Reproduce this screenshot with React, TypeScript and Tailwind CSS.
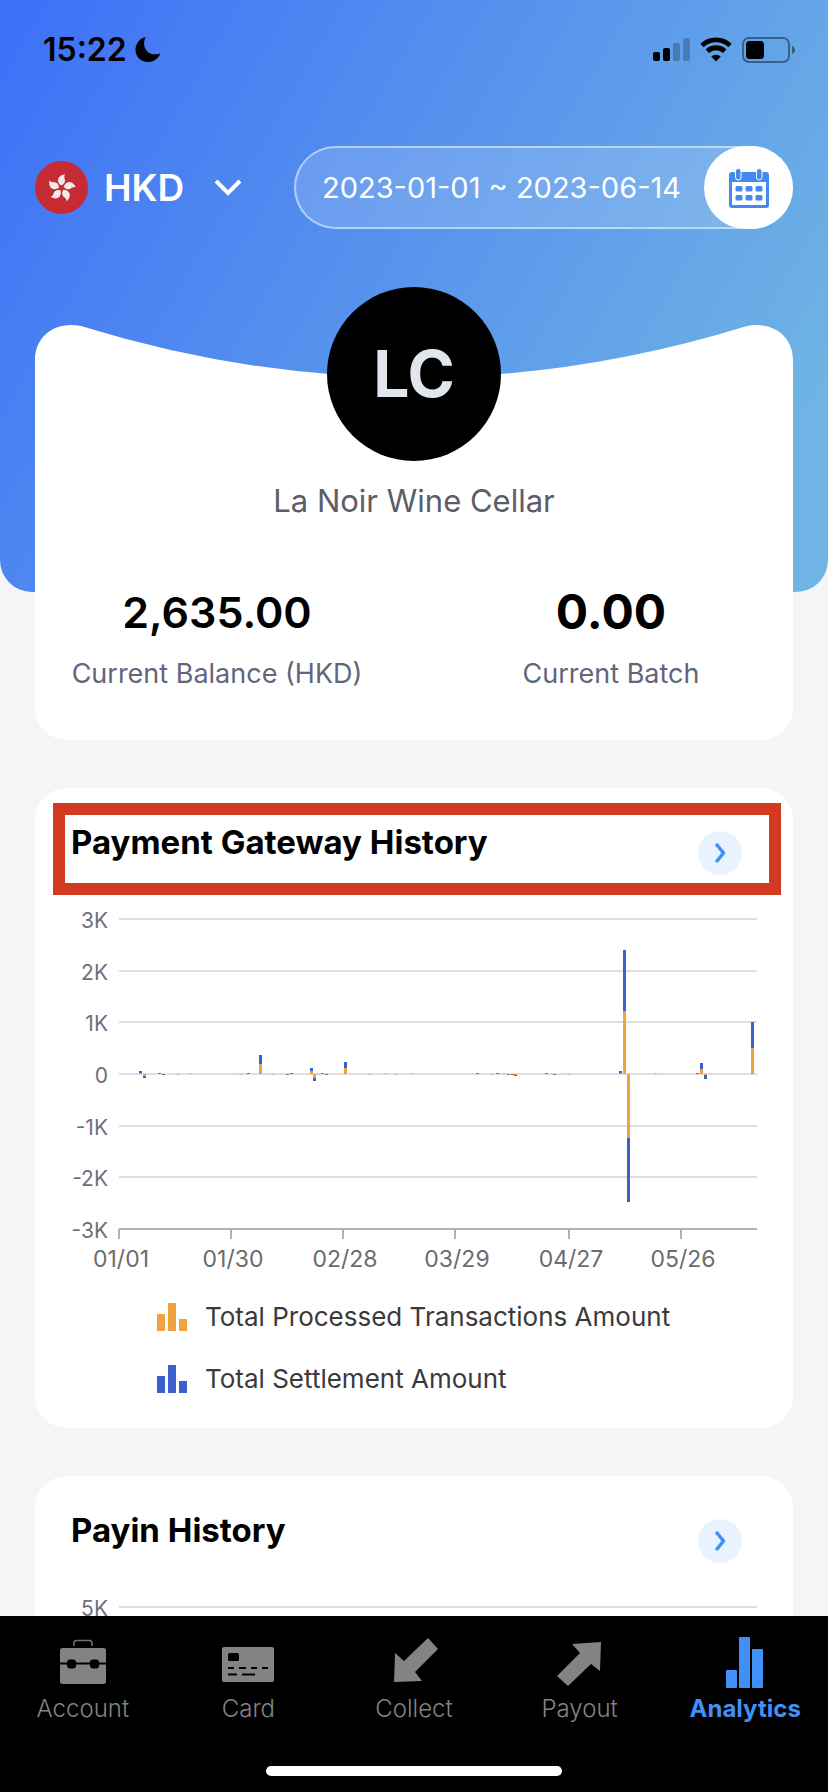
import React, { useState } from "react";

// stacked daily totals, in chart pixels above (+) or below (-) the zero line
const bars = [
  { x: 105, processed: 1, settled: 2 },
  { x: 109, processed: -2, settled: -2 },
  { x: 225, processed: 10, settled: 9 },
  { x: 276, processed: 3, settled: 3 },
  { x: 279, processed: -4, settled: -3 },
  { x: 310, processed: 6, settled: 6 },
  { x: 480, processed: -1, settled: -1 },
  { x: 585, processed: 1, settled: 2 },
  { x: 589, processed: 63, settled: 61 },
  { x: 593, processed: -64, settled: -64 },
  { x: 666, processed: 5, settled: 6 },
  { x: 670, processed: -1, settled: -4 },
  { x: 717, processed: 26, settled: 26 },
];

// days with almost no volume
const traces = [
  { x: 124, up: true, dark: true },
  { x: 128, up: false, dark: true },
  { x: 143, up: false, dark: false },
  { x: 155, up: true, dark: false },
  { x: 205, up: false, dark: false },
  { x: 213, up: true, dark: true },
  { x: 237, up: false, dark: false },
  { x: 252, up: false, dark: true },
  { x: 256, up: true, dark: true },
  { x: 283, up: false, dark: false },
  { x: 287, up: true, dark: true },
  { x: 291, up: false, dark: true },
  { x: 334, up: false, dark: false },
  { x: 350, up: true, dark: false },
  { x: 361, up: false, dark: false },
  { x: 376, up: true, dark: false },
  { x: 442, up: true, dark: true },
  { x: 456, up: false, dark: false },
  { x: 462, up: true, dark: true },
  { x: 469, up: true, dark: false },
  { x: 473, up: false, dark: true },
  { x: 477, up: false, dark: true },
  { x: 511, up: true, dark: true },
  { x: 519, up: false, dark: true },
  { x: 533, up: false, dark: false },
  { x: 620, up: true, dark: false },
  { x: 662, up: true, dark: true },
];

const xTicks = [
  { x: 84, label: "01/01" },
  { x: 196, label: "01/30" },
  { x: 308, label: "02/28" },
  { x: 420, label: "03/29" },
  { x: 534, label: "04/27" },
  { x: 646, label: "05/26" },
];

const ORANGE = "#f0a23c";
const BLUE = "#3b5fcb";

const StatusBar: React.FC = () => (
  <div className="flex h-[100px] items-center justify-between pl-[43px] pr-8 text-black">
    <div className="flex items-center gap-2">
      <span className="text-[32px] font-semibold leading-9">15:22</span>
      <svg className="h-[26px] w-[26px]" viewBox="0 0 26 26" fill="currentColor" aria-hidden="true">
        <path d="M10.500 0C4.700 1.400.5 6.600.5 12.800.5 19.700 6 25 12.800 25c5.700 0 10.600-3.300 12.400-8.600-5.600 1.900-10.800.9-13.600-2.700C8.700 10 8.300 5 10.500 0Z" />
      </svg>
    </div>
    <div className="flex items-center gap-[10px]">
      <svg className="h-[26px] w-[37px]" viewBox="0 0 37 26" fill="currentColor" aria-hidden="true">
        <rect x="0" y="15" width="7" height="9" rx="2" />
        <rect x="10" y="11" width="7" height="13" rx="2" />
        <rect x="20" y="6" width="7" height="18" rx="2" opacity="0.22" />
        <rect x="30" y="1" width="7" height="23" rx="2" opacity="0.22" />
      </svg>
      <svg className="h-[26px] w-8" viewBox="0 0 32 26" aria-hidden="true">
        <path d="M2 8.500a20.500 20.500 0 0 1 28 0" fill="none" stroke="currentColor" strokeWidth="4.800" />
        <path d="M7.300 14.200a12.700 12.700 0 0 1 17.400 0" fill="none" stroke="currentColor" strokeWidth="4.800" />
        <path d="M16 24.500 11.200 19.600a7 7 0 0 1 9.600 0Z" fill="currentColor" />
      </svg>
      <svg className="h-[26px] w-[54px]" viewBox="0 0 54 26" aria-hidden="true">
        <rect x="1" y="1" width="46" height="24" rx="6" fill="none" stroke="#000" strokeWidth="2" opacity="0.42" />
        <rect x="4" y="4" width="18" height="18" rx="3.500" />
        <path d="M50 9v8c1.800-.6 3-2.200 3-4s-1.200-3.400-3-4Z" opacity="0.45" />
      </svg>
    </div>
  </div>
);

const HongKongFlag: React.FC = () => (
  <svg className="h-[53px] w-[53px]" viewBox="0 0 53 53" aria-hidden="true">
    <circle cx="26.500" cy="26.500" r="26.500" fill="#c62a33" />
    {[0, 72, 144, 216, 288].map((angle) => (
      <path
        key={angle}
        d="M26 24.500c-4.800-3.500-4-10.300 4-11.300-1.200 2.200-.6 3.800-.1 5.600.6 2.300-.9 4.700-3.900 5.700Z"
        transform={`rotate(${angle} 26.500 27)`}
        fill="#f3e9e8"
      />
    ))}
  </svg>
);

const CalendarIcon: React.FC = () => (
  <svg className="h-10 w-10" viewBox="0 0 40 40" aria-hidden="true">
    <rect x="0" y="4" width="40" height="36" rx="3" fill="#4489ee" />
    <rect x="3" y="14" width="34" height="23" fill="#fff" />
    {[6.5, 16.5, 26.5].map((x) => (
      <React.Fragment key={x}>
        <rect x={x} y="18" width="7" height="5.500" rx="1.500" fill="#4489ee" />
        <rect x={x} y="27" width="7" height="5.500" rx="1.500" fill="#4489ee" />
      </React.Fragment>
    ))}
    <rect x="6.500" y="0.500" width="5.500" height="11.500" rx="2.700" fill="#4489ee" stroke="#fff" />
    <rect x="27.500" y="0.500" width="5.500" height="11.500" rx="2.700" fill="#4489ee" stroke="#fff" />
  </svg>
);

const LegendIcon: React.FC<{ color: string }> = ({ color }) => (
  <svg className="h-7 w-[30px]" viewBox="0 0 30 28" fill={color} aria-hidden="true">
    <rect x="0" y="11" width="8" height="17" />
    <rect x="11" y="0" width="8" height="28" />
    <rect x="22" y="16" width="8" height="12" />
  </svg>
);

const HistoryChart: React.FC<{ title: string; yLabels: string[] }> = ({ title, yLabels }) => (
  <svg className="block h-auto w-full" viewBox="0 0 758 372" role="img" aria-label={title}>
    {yLabels.map((label, i) => {
      const y = Math.round(16 + (i * 310) / 6);
      const isAxis = i === 6;
      return (
        <g key={label}>
          <line x1="84" x2="722" y1={y} y2={y} stroke={isAxis ? "#b2b2b2" : "#dedee0"} strokeWidth="2" />
          <text x="73" y={y + 9} textAnchor="end" fontSize="21" fill="#6c6f80">
            {label}
          </text>
        </g>
      );
    })}
    {yLabels.length === 7 && (
      <>
        {xTicks.map((t) => (
          <g key={t.label}>
            <line x1={t.x} x2={t.x} y1="326" y2="336" stroke="#b2b2b2" strokeWidth="2" />
            <text x={t.x + 2} y="364" textAnchor="middle" fontSize="23" fill="#6b6b6d">
              {t.label}
            </text>
          </g>
        ))}
        {traces.map((t) => (
          <rect key={t.x} x={t.x - 1} y={t.up ? 170 : 171} width="3" height="1" fill={t.dark ? "#77777b" : "#bcbcbe"} />
        ))}
        {bars.map((b) => {
          const up = b.processed > 0;
          const p = Math.abs(b.processed);
          const s = Math.abs(b.settled);
          return (
            <g key={b.x}>
              <rect x={b.x - 1} y={up ? 171 - p : 171} width="3" height={p} fill={ORANGE} />
              <rect x={b.x - 1} y={up ? 171 - p - s : 171 + p} width="3" height={s} fill={BLUE} />
            </g>
          );
        })}
      </>
    )}
  </svg>
);

interface HistoryCardProps {
  title: string;
  yLabels: string[];
  highlighted?: boolean;
  legend?: { label: string; color: string }[];
}

const HistoryCard: React.FC<HistoryCardProps> = ({ title, yLabels, highlighted, legend }) => (
  <section className="relative mt-12 rounded-[32px] bg-white pb-[29px]">
    {highlighted && (
      <div className="pointer-events-none absolute left-[18px] right-3 top-[15px] h-[92px] border-[12px] border-[#d13a20]" />
    )}
    <div className="flex items-start justify-between pb-7 pl-9 pr-[51px] pt-[34px]">
      <h2 className="text-[33px] font-bold leading-10 text-black">{title}</h2>
      <button
        type="button"
        aria-label={`Open ${title}`}
        className="mt-[9px] flex h-11 w-11 items-center justify-center rounded-full bg-[#e8f3ff]"
      >
        <svg className="h-5 w-3" viewBox="0 0 12 20" fill="none" stroke="#3f92f5" strokeWidth="3.500" aria-hidden="true">
          <path d="m3 2 6.500 8L3 18" strokeLinecap="round" strokeLinejoin="round" />
        </svg>
      </button>
    </div>
    <HistoryChart title={title} yLabels={yLabels} />
    {legend && (
      <ul className="mt-[22px] space-y-[22px] pl-[122px] text-[26px] leading-10 text-[#3a3a3c]">
        {legend.map((item) => (
          <li key={item.label} className="flex items-center gap-[18px]">
            <LegendIcon color={item.color} />
            {item.label}
          </li>
        ))}
      </ul>
    )}
  </section>
);

const tabs = [
  {
    name: "Account",
    icon: (
      <>
        <path d="M19 10V7q0-2.500 2.500-2.500h13Q37 4.500 37 7v3" fill="none" stroke="#6f6f6f" strokeWidth="1.500" />
        <rect x="5" y="12" width="46" height="36" rx="2.500" />
        <path d="M5 27.500h46" stroke="#000" strokeWidth="2" />
        <rect x="12" y="23.500" width="9" height="9" rx="3" fill="#000" />
        <rect x="35" y="23.500" width="9" height="9" rx="3" fill="#000" />
      </>
    ),
  },
  {
    name: "Card",
    icon: (
      <>
        <rect x="2" y="11" width="52" height="35" rx="2" />
        <rect x="8" y="17" width="11" height="8" rx="1.500" fill="#000" />
        <path d="M8 32h6m5 0h7m5 0h6m5 0h6M8 38.500h9m5 0h13" stroke="#000" strokeWidth="2" />
      </>
    ),
  },
  {
    name: "Collect",
    icon: <path d="m42 2 10 11-23 23 7 9-28 1 1-29 9 8Z" />,
  },
  {
    name: "Payout",
    icon: <path d="M49 6 48 35l-9-7-23 22L5 40l23-23-8-9Z" />,
  },
  {
    name: "Analytics",
    icon: (
      <>
        <rect x="9" y="34" width="11" height="18" rx="1" />
        <rect x="22" y="1" width="11" height="51" rx="1" />
        <rect x="35" y="13" width="11" height="39" rx="1" />
      </>
    ),
  },
];

export default function App() {
  const [activeTab, setActiveTab] = useState("Analytics");

  return (
    <div className="flex h-screen flex-col bg-[#f5f5f5] font-[Inter,'Liberation_Sans',sans-serif]">
      <main className="min-h-0 flex-1 overflow-hidden">
        {/* Header */}
        <header className="rounded-b-[32px] bg-[linear-gradient(120deg,#3d6ff8_0%,#5590ee_42%,#6fb4e4_90%,#70b4e4_100%)] pb-[363px]">
          <StatusBar />
          <div className="flex items-center justify-between px-[35px] pt-[46px]">
            <button type="button" className="flex items-center text-white">
              <HongKongFlag />
              <span className="ml-4 text-[37px] font-semibold leading-[48px]">HKD</span>
              <svg className="ml-[30px] h-[18px] w-7" viewBox="0 0 28 18" fill="none" stroke="currentColor" aria-hidden="true">
                <path d="m2 2 12 12L26 2" strokeWidth="4" />
              </svg>
            </button>
            <button
              type="button"
              className="flex h-[83px] w-[499px] items-center justify-between rounded-full border-2 border-white/50 bg-white/15 pl-[26px] text-[29px] text-white"
            >
              <span className="whitespace-nowrap">2023-01-01 ~ 2023-06-14</span>
              <span className="-my-[2px] -mr-[2px] flex h-[83px] w-[89px] shrink-0 items-center justify-center rounded-full bg-white">
                <CalendarIcon />
              </span>
            </button>
          </div>
        </header>

        <div className="px-[35px]">
          {/* Profile & balances */}
          <section className="relative -mt-[267px]">
            <svg className="block h-[60px] w-full" viewBox="0 0 758 60" preserveAspectRatio="none" fill="#fff" aria-hidden="true">
              <path d="M0 60V35C0 12 19-4 46 1Q379 104 712 1C739-4 758 12 758 35V60Z" />
            </svg>
            <div className="flex flex-col items-center rounded-b-[32px] bg-white pb-[46px]">
              <div className="-mt-[98px] flex h-[174px] w-[174px] items-center justify-center rounded-full bg-black text-[64px] font-bold text-[#e1e6ec]">
                LC
              </div>
              <p className="mt-5 text-[31px] leading-10 text-[#5c5d66]">La Noir Wine Cellar</p>
              <dl className="mt-[61px] grid w-full grid-cols-2 gap-[100px] px-[35px] text-center">
                <div className="flex flex-col-reverse gap-3">
                  <dt className="whitespace-nowrap text-[27px] leading-10 text-[#62657b]">Current Balance (HKD)</dt>
                  <dd className="text-[43px] font-semibold leading-[60px] text-black">2,635.00</dd>
                </div>
                <div className="flex flex-col-reverse gap-3">
                  <dt className="whitespace-nowrap text-[27px] leading-10 text-[#62657b]">Current Batch</dt>
                  <dd className="text-[48px] font-bold leading-[60px] text-black">0.00</dd>
                </div>
              </dl>
            </div>
          </section>

          <HistoryCard
            title="Payment Gateway History"
            yLabels={["3K", "2K", "1K", "0", "-1K", "-2K", "-3K"]}
            legend={[
              { label: "Total Processed Transactions Amount", color: ORANGE },
              { label: "Total Settlement Amount", color: BLUE },
            ]}
            highlighted
          />
          <HistoryCard title="Payin History" yLabels={["5K"]} />
        </div>
      </main>

      {/* Tab bar */}
      <nav className="shrink-0 bg-black pb-4 pt-5">
        <div className="grid grid-cols-5">
          {tabs.map((tab) => (
            <button
              key={tab.name}
              type="button"
              onClick={() => setActiveTab(tab.name)}
              className={`flex flex-col items-center ${
                activeTab === tab.name ? "font-bold text-[#4190f7]" : "font-light text-[#838383]"
              }`}
            >
              <svg className="h-[52px] w-14" viewBox="0 0 56 52" fill="currentColor" aria-hidden="true">
                {tab.icon}
              </svg>
              <span className="mt-[5px] text-[24px] leading-8">{tab.name}</span>
            </button>
          ))}
        </div>
        <div className="mx-auto mt-[41px] h-[10px] w-[296px] rounded-full bg-white" />
      </nav>
    </div>
  );
}
